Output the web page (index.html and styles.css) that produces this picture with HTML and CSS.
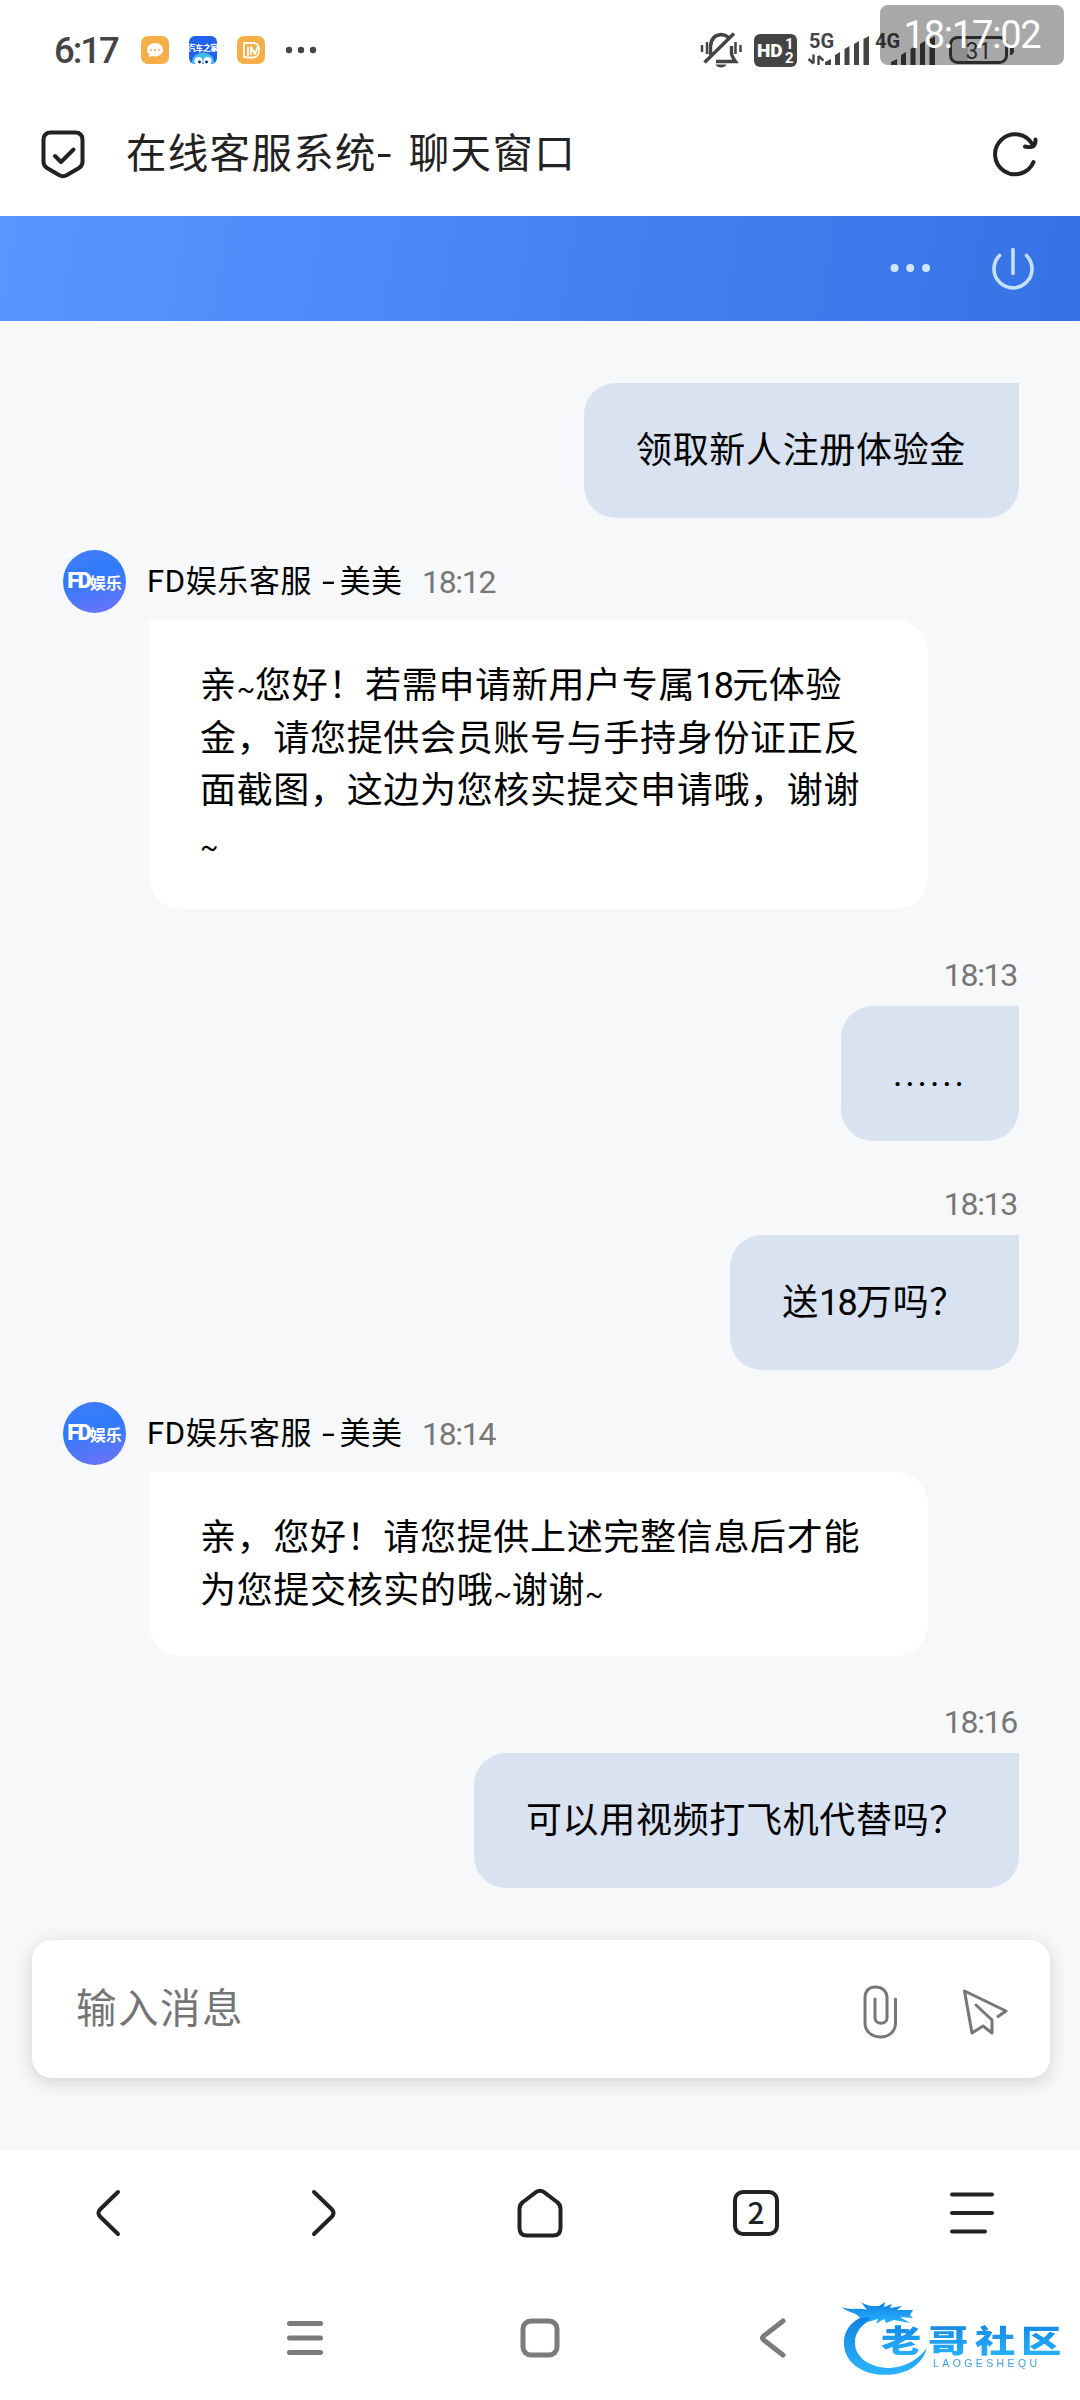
FILE: index.html
```html
<!DOCTYPE html>
<html lang="zh-CN">

<head>
    <meta charset="utf-8">
    <meta name="viewport" content="width=device-width, initial-scale=1.0">
    <title>在线客服系统- 聊天窗口</title>
    <link rel="stylesheet" href="styles.css">
</head>

<body>
    <div class="statusbar">
        <div class="status-left">
            <span class="clock">6:17</span>
            <svg class="app" width="28" height="28" viewBox="0 0 28 28">
                <rect width="28" height="28" rx="7" fill="#f6ae48" />
                <path d="M14 7c4.600 0 8 3 8 6.800s-3.400 6.700-8 6.700c-1 0-2-.1-2.800-.4L8 21l.2-2.400C6.800 17.400 6 15.700 6 13.800 6 10 9.400 7 14 7z" fill="#fff" />
                <g fill="#f6ae48"><circle cx="10" cy="14" r="1.100" /><circle cx="14" cy="14" r="1.100" /><circle cx="18" cy="14" r="1.100" /></g>
            </svg>
            <svg class="app" width="28" height="28" viewBox="0 0 28 28">
                <clipPath id="appclip"><rect width="28" height="28" rx="6" /></clipPath>
                <g clip-path="url(#appclip)">
                    <rect width="28" height="28" fill="#2362ec" />
                    <ellipse cx="14" cy="26" rx="11" ry="9.500" fill="#42b9f8" />
                    <circle cx="9.500" cy="25" r="4" fill="#fff" /><circle cx="18.500" cy="25" r="4" fill="#fff" />
                    <circle cx="10.500" cy="26" r="1.400" fill="#123" /><circle cx="17.500" cy="26" r="1.400" fill="#123" />
                    <text x="14" y="14.500" class="app-name" text-anchor="middle">汽车之家</text>
                </g>
            </svg>
            <svg class="app" width="28" height="28" viewBox="0 0 28 28">
                <rect width="28" height="28" rx="7" fill="#f6ae48" />
                <path d="M9 21H7V7h9c4 0 6 3 6 7s-2 7.500-6 7.500H9M11 20V11M14 19v-8l4 7 3-8" fill="none" stroke="#fff" stroke-width="1.800" stroke-linejoin="round" />
            </svg>
            <svg class="more" width="32" height="8" viewBox="0 0 32 8" fill="#444">
                <circle cx="4" cy="4" r="3.200" /><circle cx="16" cy="4" r="3.200" /><circle cx="28" cy="4" r="3.200" />
            </svg>
        </div>
        <div class="status-right">
            <svg width="42" height="36" viewBox="0 0 42 36" fill="none" stroke="#444" stroke-width="3.400">
                <path d="M10.500 23V14.500C11 7 15 3 21 2.500c3.500.2 6 1.300 8 3.500M31.500 14v7c0 3 1.500 5 4 8.500H16M4.500 30.500L34 1.500" />
                <path d="M2 13v7M7 10v12M35.500 10v12M40.500 13v7" stroke-width="2.500" />
                <path d="M15.500 32.500h11c-2 4-9 4-11 0z" fill="#444" stroke="none" />
            </svg>
            <svg class="hd" width="43" height="33" viewBox="0 0 43 33">
                <rect width="43" height="33" rx="6" fill="#444" />
                <text x="3" y="23" class="hd-text">HD</text>
                <text x="31" y="15" class="hd-small">1</text>
                <text x="31" y="28.500" class="hd-small">2</text>
            </svg>
            <svg class="signal" width="62" height="32" viewBox="0 0 62 32" fill="#444">
                <text x="1" y="14" class="net">5G</text>
                <path d="M5.500 20.500v9M5.500 29.500l-5-4.500M10.500 31v-9M10.500 22l5 4.500" fill="none" stroke="#444" stroke-width="2.400" />
                <path d="M17 31v-3l6-3v6zM27 31V21l5-3v13zM36.500 31V15l5-3v19zM46 31V10l5-3v24zM55.500 31V5l5.500-3v29z" />
            </svg>
            <svg class="signal two" width="62" height="32" viewBox="0 0 62 32" fill="#444">
                <text x="1" y="14" class="net">4G</text>
                <path d="M17 31v-3l6-3v6zM27 31V21l5-3v13zM36.500 31V15l5-3v19zM46 31V10l5-3v24zM55.500 31V5l5.500-3v29z" />
            </svg>
            <svg class="battery" width="66" height="28" viewBox="0 0 66 28">
                <rect x="3" y="3" width="16" height="22" fill="#d8d8d8" />
                <rect x="1.500" y="1.500" width="56" height="25" rx="7" fill="none" stroke="#444" stroke-width="3" />
                <path d="M61 9c3 0 4 2 4 5s-1 5-4 5z" fill="#444" />
                <text x="29.500" y="22.500" class="level" text-anchor="middle">31</text>
            </svg>
        </div>
        <div class="stamp">18:17:02</div>
    </div>

    <header class="titlebar">
        <svg width="44" height="48" viewBox="0 0 44 48" fill="none" stroke="#222" stroke-width="4" stroke-linecap="round" stroke-linejoin="round">
            <path d="M10 2.500h24c5 0 7.500 2.500 7.500 7.500v22c0 3-1 4.500-3.500 6l-12 7c-2.800 1.600-5.200 1.600-8 0l-12-7c-2.500-1.500-3.500-3-3.500-6V10c0-5 2.500-7.500 7.500-7.500z" />
            <path d="M14 26l6 6 12.500-12.500" />
        </svg>
        <h1>在线客服系统<span class="dash">-</span>聊天窗口</h1>
        <svg width="46" height="46" viewBox="0 0 46 46" fill="none" stroke="#222" stroke-width="4" stroke-linecap="round" stroke-linejoin="round">
            <path d="M41.500 31A20 20 0 1 1 40.500 13.500M33 15.500c7 1.500 10.500 1 10.500-7" />
        </svg>
    </header>

    <nav class="chat-top">
        <svg width="40" height="10" viewBox="0 0 40 10" fill="#d0e5ff">
            <circle cx="4.500" cy="4" r="4" /><circle cx="20.200" cy="4" r="4" /><circle cx="36" cy="4" r="4" />
        </svg>
        <svg width="42" height="42" viewBox="0 0 42 42" fill="none" stroke="#c5e1ff" stroke-width="3.600" stroke-linecap="round">
            <path d="M7.500 7.500a19 19 0 1 0 27 0M21 1.500v24" />
        </svg>
    </nav>

    <main class="chat">
        <section class="own first">
            <p class="bubble">领取新人注册体验金</p>
        </section>

        <section class="agent">
            <div class="who">
                <div class="avatar"><b>FD</b>娱乐</div>
                <span class="name">FD娱乐客服 <span class="hyphen">-</span>美美</span>
                <span class="time">18:12</span>
            </div>
            <p class="bubble">亲<i>~</i>您好！若需申请新用户专属<em>18</em>元体验<br>金，请您提供会员账号与手持身份证正反<br>面截图，这边为您核实提交申请哦，谢谢<br><i>~</i></p>
        </section>

        <section class="own">
            <span class="time">18:13</span>
            <p class="bubble dots">......</p>
        </section>

        <section class="own">
            <span class="time">18:13</span>
            <p class="bubble">送<em>18</em>万吗？</p>
        </section>

        <section class="agent">
            <div class="who">
                <div class="avatar"><b>FD</b>娱乐</div>
                <span class="name">FD娱乐客服 <span class="hyphen">-</span>美美</span>
                <span class="time">18:14</span>
            </div>
            <p class="bubble">亲，您好！请您提供上述完整信息后才能<br>为您提交核实的哦<i>~</i>谢谢<i>~</i></p>
        </section>

        <section class="own">
            <span class="time">18:16</span>
            <p class="bubble">可以用视频打飞机代替吗？</p>
        </section>

        <div class="compose">
            <span class="placeholder">输入消息</span>
            <svg width="36" height="54" viewBox="0 0 36 54" fill="none" stroke="#777" stroke-width="3" stroke-linecap="round">
                <path d="M33.500 14v24c0 8-6 14-15 14S3 46 3 38V13C3 6 7 2 13.500 2S25 6 25 13v20c0 7-12 7-12 0V14" />
            </svg>
            <svg width="46" height="46" viewBox="0 0 46 46" fill="none" stroke="#777" stroke-width="3" stroke-linecap="round" stroke-linejoin="round">
                <path d="M36 27.500l8-5.500L2.500 2 10 44l11-7 9 7V31L14 16" />
            </svg>
        </div>
    </main>

    <footer class="toolbar">
        <div><svg width="24" height="48" viewBox="0 0 24 48"><path d="M22 3L4.500 20c-2.800 2.800-2.800 5.200 0 8L22 45" /></svg></div>
        <div><svg width="24" height="48" viewBox="0 0 24 48"><path d="M2 3l17.500 17c2.800 2.800 2.800 5.200 0 8L2 45" /></svg></div>
        <div><svg width="46" height="50" viewBox="0 0 46 50"><path d="M6 14L19 4.200c3-2.200 5-2.200 8 0L40 14c2.800 2 3.500 3.500 3.500 7v19c0 5-2.500 7.500-7.500 7.500H10c-5 0-7.500-2.500-7.500-7.500V21c0-3.500.7-5 3.500-7z" /></svg></div>
        <div><span class="tabs">2</span></div>
        <div><svg width="46" height="44" viewBox="0 0 46 44"><path d="M3 3.500h40M3 22h40M3 40.500h33" /></svg></div>
    </footer>

    <footer class="sysnav">
        <svg width="40" height="40" viewBox="0 0 40 40"><path d="M4.500 5.500h31M4.500 20h31M4.500 34.500h31" /></svg>
        <svg width="40" height="40" viewBox="0 0 40 40"><rect x="3" y="3" width="34" height="34" rx="8" /></svg>
        <svg width="40" height="40" viewBox="0 0 40 40"><path d="M28 3L10 17c-3.500 2.500-3.500 3.500 0 6l18 14" /></svg>
        <svg class="logo" width="230" height="84" viewBox="0 0 230 84">
            <defs>
                <linearGradient id="blue" x1="0" y1="0" x2="0" y2="1">
                    <stop offset="0" stop-color="#0d80e0" />
                    <stop offset="1" stop-color="#2bb4ff" />
                </linearGradient>
            </defs>
            <g fill="url(#blue)">
                <path d="M44 16C15 15 3 30 4 47c2 23 27 33 52 29 16-3 27-12 31-26-9 12-22 19-37 20-19 0-35-10-35-25 0-13 9-22 29-29z" />
                <path d="M2 9c9 4 17 0 25 3l-6-8c8 5 13 4 18 4l6-4-1 5 8-3-2 4 12-2-5 4h16l-3 5 3 3-13-1 10 6-16-3-8 3-2-4-8 5 2-5-10 3 2-5-10 1C15 13 7 15 2 9z" />
            </g>
            <g class="logo-text" fill="url(#blue)">
                <text transform="translate(41 53.500) scale(1.300 1)">老</text>
                <text transform="translate(88 53.500) scale(1.300 1)">哥</text>
                <text transform="translate(135 53.500) scale(1.300 1)">社</text>
                <text transform="translate(181 53.500) scale(1.300 1)">区</text>
            </g>
            <text class="logo-sub" x="93" y="68.500" fill="#3f9fdf">LAOGESHEQU</text>
        </svg>
    </footer>
</body>

</html>
```
FILE: styles.css
```css
* {
    box-sizing: border-box;
}

body {
    margin: 0;
    width: 1080px;
    height: 2400px;
    overflow: hidden;
    background: #fff;
    color: #000;
    font-family: Roboto, "Noto Sans CJK SC", sans-serif;
}

svg {
    display: block;
    flex: none;
    overflow: visible;
}

p,
h1 {
    margin: 0;
    font-weight: 400;
}

/* status bar */

.statusbar {
    position: relative;
    display: flex;
    justify-content: space-between;
    height: 100px;
    padding: 0 65px 0 54px;
}

.status-left,
.status-right {
    display: flex;
    align-items: center;
}

.clock {
    width: 87px;
    font-size: 36.5px;
    font-weight: 500;
    letter-spacing: -2px;
    color: #444;
}

.app {
    margin-right: 20px;
}

.app-name {
    font-size: 7.5px;
    font-weight: 900;
    fill: #fff;
}

.hd {
    margin-left: 12px;
}

.hd-text {
    font-size: 19px;
    font-weight: 900;
    fill: #fff;
}

.hd-small {
    font-size: 15px;
    font-weight: 700;
    fill: #fff;
}

.signal {
    margin-left: 11px;
}

.two {
    margin-left: 4px;
}

.net {
    font-size: 20px;
    font-weight: 700;
}

.battery {
    margin-left: 13px;
}

.level {
    font-size: 23px;
    fill: #444;
}

.stamp {
    position: absolute;
    top: 5px;
    left: 880px;
    width: 184px;
    height: 60px;
    border-radius: 8px;
    background: rgba(0, 0, 0, 0.34);
    color: #fff;
    font-size: 38px;
    line-height: 61px;
    text-align: center;
    letter-spacing: -1.2px;
}

/* browser title */

.titlebar {
    display: flex;
    align-items: center;
    height: 116px;
    padding: 0 42px 8px 41px;
}

.titlebar h1 {
    flex: 1;
    margin-left: 41px;
    font-size: 40.5px;
    letter-spacing: 1.3px;
    line-height: 60px;
    color: #222;
}

.dash {
    display: inline-block;
    width: 32px;
    transform: scaleX(1.3);
    transform-origin: left;
}

.chat-top {
    display: flex;
    align-items: center;
    justify-content: flex-end;
    gap: 62px;
    height: 105px;
    padding-right: 46px;
    background: linear-gradient(100deg, #5797ff, #4d89f8 35%, #4280ee 60%, #3672e5);
}

/* messages */

.chat {
    display: flex;
    flex-direction: column;
    height: 1829px;
    padding: 62px 61px 0 63px;
    background: #f7f8fa;
}

.bubble {
    padding: 40px 52px 39px 51px;
    font-size: 36px;
    line-height: 52.5px;
    letter-spacing: 0.67px;
}

.bubble em {
    font-style: normal;
    letter-spacing: -1.7px;
}

.bubble i {
    font-style: normal;
    font-size: 27px;
    letter-spacing: 0;
    line-height: 1;
}

.time {
    font-size: 32px;
    line-height: 40px;
    letter-spacing: -1.3px;
    color: #777;
}

.own {
    display: flex;
    flex-direction: column;
    align-items: flex-end;
    padding-top: 43px;
}

.own .time {
    margin: 0 2px 11px 0;
}

.own .bubble {
    height: 135px;
    padding: 42px 53px 0 52px;
    border-radius: 32px 0 32px 32px;
    background: #d9e2f0;
}

.own .dots {
    width: 178px;
    letter-spacing: 2.8px;
}

.first {
    padding-top: 0;
}

.agent {
    padding: 32px 0 3px;
}

.who {
    display: flex;
    align-items: center;
    height: 63px;
}

.avatar {
    display: flex;
    align-items: center;
    justify-content: center;
    width: 63px;
    height: 63px;
    border-radius: 50%;
    background: linear-gradient(165deg, #3f7cf8 10%, #2f7bfb 40%, #7272f8);
    color: #fff;
    font-size: 16px;
    font-weight: 700;
}

.avatar b {
    font-size: 22px;
    font-weight: 900;
    letter-spacing: -2px;
    transform: translateY(-1px);
}

.name {
    width: 275px;
    margin-left: 21px;
    font-size: 31px;
    line-height: 40px;
    letter-spacing: 0.6px;
    white-space: nowrap;
}

.hyphen {
    display: inline-block;
    width: 17px;
    margin-left: 2px;
    transform: scaleX(1.5);
    transform-origin: left;
}

.agent .bubble {
    width: 779px;
    margin: 7px 0 0 86px;
    border-radius: 0 32px 32px 32px;
    background: #fff;
}

.compose {
    display: flex;
    align-items: center;
    height: 138px;
    margin: 52px -31px 0;
    padding: 0 42px 0 44px;
    border-radius: 20px;
    background: #fff;
    box-shadow: 0 4px 18px rgba(0, 0, 0, 0.16);
}

.compose svg {
    margin: 6px 0 0 64px;
}

.placeholder {
    flex: 1;
    margin-bottom: 7px;
    font-size: 40.5px;
    letter-spacing: 1.5px;
    color: #757575;
}

/* bottom bars */

.toolbar {
    display: flex;
    height: 126px;
}

.toolbar div {
    display: flex;
    flex: 1;
    align-items: center;
    justify-content: center;
}

.toolbar svg {
    fill: none;
    stroke: #222;
    stroke-width: 4;
    stroke-linecap: round;
}

.tabs {
    width: 46px;
    height: 46px;
    border: 4px solid #222;
    border-radius: 10px;
    color: #222;
    font-family: "Noto Sans CJK SC", sans-serif;
    font-size: 30px;
    font-weight: 500;
    line-height: 35px;
    text-align: center;
}

.sysnav {
    position: relative;
    display: flex;
    align-items: center;
    justify-content: center;
    gap: 195px;
    height: 124px;
}

.sysnav svg {
    fill: none;
    stroke: #7b7b7b;
    stroke-width: 5;
    stroke-linecap: round;
}

.sysnav .logo {
    position: absolute;
    top: 22px;
    left: 840px;
    stroke: none;
    filter: blur(0.5px);
}

.logo-text {
    font-family: "Noto Sans CJK SC", sans-serif;
    font-size: 31px;
    font-weight: 900;
}

.logo-sub {
    font-family: "Liberation Sans", sans-serif;
    font-size: 10.5px;
    letter-spacing: 3.4px;
}
```
